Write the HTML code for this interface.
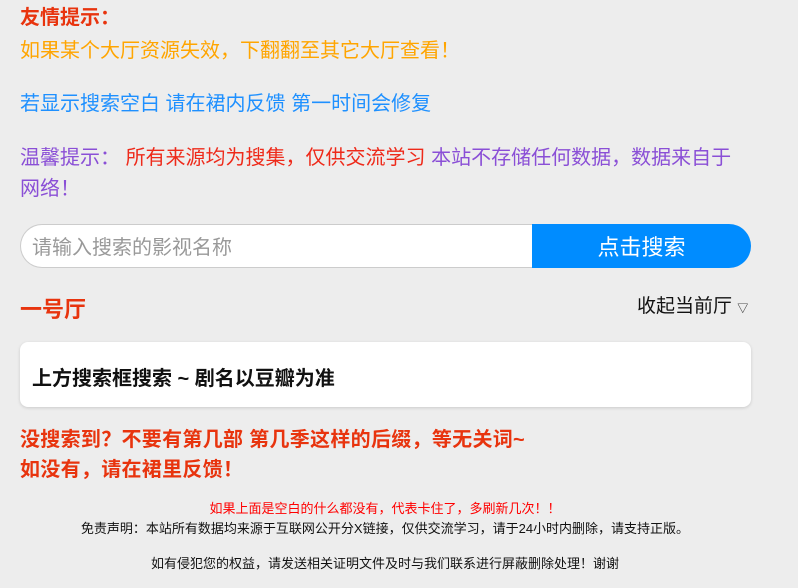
<!DOCTYPE html>
<html><head><meta charset="utf-8"><style>
body{margin:0;width:798px;height:588px;background:#ededed;font-family:"Liberation Sans","Noto Sans CJK SC",sans-serif;position:relative;overflow:hidden}
.a{position:absolute;white-space:nowrap;line-height:1}
</style></head><body>
<div class="a" style="left:20px;top:8px;font-size:20px;font-weight:bold;color:#e8340e">友情提示：</div>
<div class="a" style="left:20px;top:41px;font-size:20px;color:#ffa500">如果某个大厅资源失效，下翻翻至其它大厅查看！</div>
<div class="a" style="left:20px;top:94px;font-size:20px;color:#1e90ff">若显示搜索空白 请在裙内反馈 第一时间会修复</div>
<div class="a" style="left:20px;top:148px;font-size:20px;color:#8a4fd6">温馨提示： <span style="color:#ee2a1a">所有来源均为搜集，仅供交流学习</span> 本站不存储任何数据，数据来自于</div>
<div class="a" style="left:20px;top:179px;font-size:20px;color:#8a4fd6">网络！</div>
<div style="position:absolute;left:20px;top:224px;width:511px;height:42px;background:#fff;border:1px solid #ccc;border-right:none;border-radius:22px 0 0 22px"></div>
<div class="a" style="left:32px;top:238px;font-size:20px;color:#999">请输入搜索的影视名称</div>
<div style="position:absolute;left:532px;top:224px;width:219px;height:44px;background:#008cff;border-radius:0 22px 22px 0;color:#fff;font-size:22px;line-height:48px;text-align:center">点击搜索</div>
<div class="a" style="left:20px;top:299px;font-size:22px;font-weight:bold;color:#e8340e">一号厅</div>
<div class="a" style="left:637px;top:297px;font-size:19px;color:#111">收起当前厅 <span style="font-size:11px">▽</span></div>
<div style="position:absolute;left:20px;top:342px;width:731px;height:65px;background:#fff;border-radius:8px;box-shadow:0 1px 3px rgba(0,0,0,.15)"></div>
<div class="a" style="left:32px;top:369px;font-size:20px;font-weight:bold;color:#111">上方搜索框搜索 ~ 剧名以豆瓣为准</div>
<div class="a" style="left:20px;top:430px;font-size:20px;font-weight:bold;color:#e8340e;letter-spacing:0.3px">没搜索到？不要有第几部 第几季这样的后缀，等无关词~</div>
<div class="a" style="left:20px;top:460px;font-size:20px;font-weight:bold;color:#e8340e;letter-spacing:0.3px">如没有，请在裙里反馈！</div>
<div class="a" style="left:0;width:770px;text-align:center;top:502px;font-size:13px;color:#f00">如果上面是空白的什么都没有，代表卡住了，多刷新几次！！</div>
<div class="a" style="left:0;width:770px;text-align:center;top:522px;font-size:13px;color:#111">免责声明：本站所有数据均来源于互联网公开分X链接，仅供交流学习，请于24小时内删除，请支持正版。</div>
<div class="a" style="left:0;width:770px;text-align:center;top:557px;font-size:13px;color:#111">如有侵犯您的权益，请发送相关证明文件及时与我们联系进行屏蔽删除处理！谢谢</div>
</body></html>
